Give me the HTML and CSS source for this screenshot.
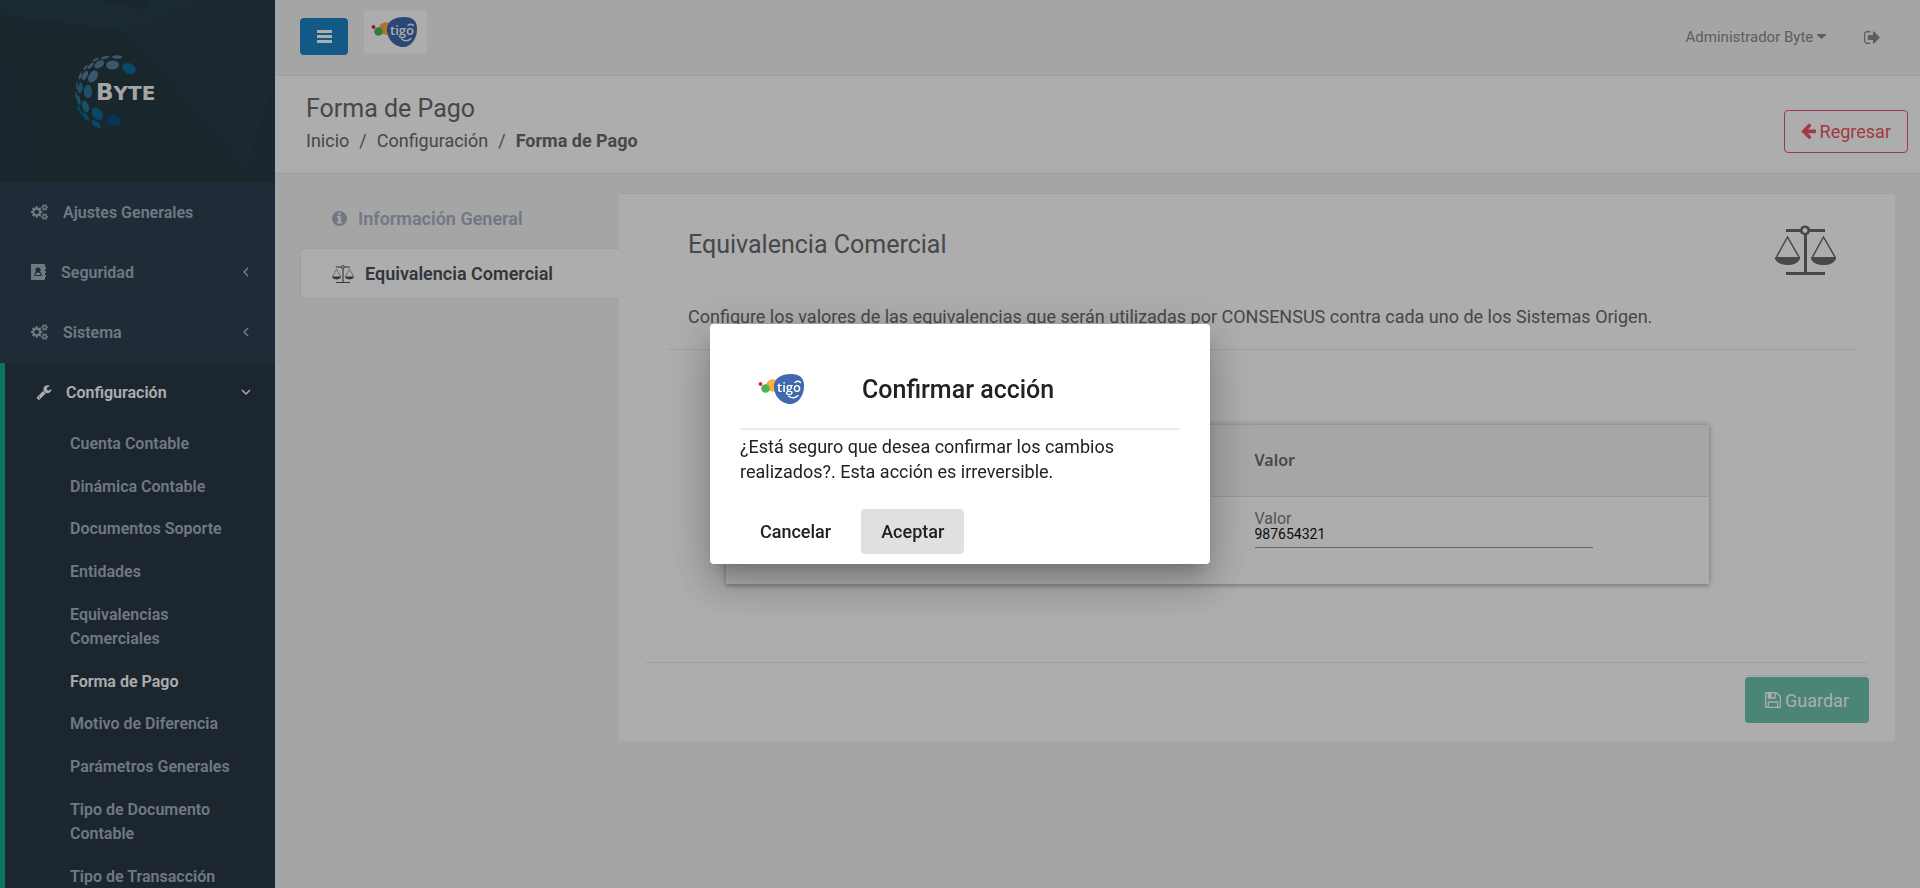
FILE: index.html
```html
<!DOCTYPE html>
<html lang="es">
<head>
<meta charset="utf-8">
<title>Forma de Pago</title>
<link rel="stylesheet" href="styles.css">
</head>
<body>
<svg class="defs" aria-hidden="true">
  <symbol id="cogs" viewBox="0 0 1920 1792"><path d="M896 896q0-106-75-181t-181-75-181 75-75 181 75 181 181 75 181-75 75-181zm768 512q0-52-38-90t-90-38-90 38-38 90q0 53 37.500 90.500t90.500 37.500 90.500-37.500 37.500-90.500zm0-1024q0-52-38-90t-90-38-90 38-38 90q0 53 37.500 90.500t90.500 37.500 90.500-37.500 37.500-90.500zm-384 421v185q0 10-7 19.500t-16 10.500l-155 24q-11 35-32 76 34 48 90 115 7 11 7 20 0 12-7 19-23 30-82.500 89.500t-78.500 59.500q-11 0-21-7l-115-90q-37 19-77 31-11 108-23 155-7 24-30 24h-186q-11 0-20-7.500t-10-17.500l-23-153q-34-10-75-31l-118 89q-7 7-20 7-11 0-21-8-144-133-144-160 0-9 7-19 10-14 41-53t47-61q-23-44-35-82l-152-24q-10-1-17-9.500t-7-19.500v-185q0-10 7-19.500t16-10.500l155-24q11-35 32-76-34-48-90-115-7-11-7-20 0-12 7-20 22-30 82-89t79-59q11 0 21 7l115 90q34-18 77-32 11-108 23-154 7-24 30-24h186q11 0 20 7.500t10 17.500l23 153q34 10 75 31l118-89q8-7 20-7 11 0 21 8 144 133 144 160 0 8-7 19-12 16-42 54t-45 60q23 48 34 82l152 23q10 2 17 10.500t7 19.500zm640 533v140q0 16-149 31-12 27-30 52 51 113 51 138 0 4-4 7-122 71-124 71-8 0-46-47t-52-68q-20 2-30 2t-30-2q-14 21-52 68t-46 47q-2 0-124-71-4-3-4-7 0-25 51-138-18-25-30-52-149-15-149-31v-140q0-16 149-31 13-29 30-52-51-113-51-138 0-4 4-7 4-2 35-20t59-34 30-16q8 0 46 46.500t52 67.500q20-2 30-2t30 2q51-71 92-112l6-2q4 0 124 70 4 3 4 7 0 25-51 138 17 23 30 52 149 15 149 31zm0-1024v140q0 16-149 31-12 27-30 52 51 113 51 138 0 4-4 7-122 71-124 71-8 0-46-47t-52-68q-20 2-30 2t-30-2q-14 21-52 68t-46 47q-2 0-124-71-4-3-4-7 0-25 51-138-18-25-30-52-149-15-149-31v-140q0-16 149-31 13-29 30-52-51-113-51-138 0-4 4-7 4-2 35-20t59-34 30-16q8 0 46 46.500t52 67.500q20-2 30-2t30 2q51-71 92-112l6-2q4 0 124 70 4 3 4 7 0 25-51 138 17 23 30 52 149 15 149 31z"/></symbol>
  <symbol id="book" viewBox="0 0 15 16"><path fill-rule="evenodd" d="M1 0h12q1 0 1 1v2h1v2h-1v2h1v2h-1v2h1v2h-1v2q0 1-1 1H1q-1 0-1-1V1q0-1 1-1zM7 3.500a2.500 2.500 0 0 0-2 4.200Q3 8.500 3 12h8Q11 8.500 9 7.700A2.500 2.500 0 0 0 7 3.500zM7 8.500q2.500 0 3 2.500H4Q4.500 8.500 7 8.500z"/></symbol>
  <symbol id="wrench" viewBox="0 0 1792 1792"><path d="M448 1472q0-26-19-45t-45-19-45 19-19 45 19 45 45 19 45-19 19-45zm644-420l-682 682q-37 37-90 37-52 0-91-37l-106-108q-38-36-38-90 0-53 38-91l681-681q39 98 114.500 173.500t173.500 114.500zm634-435q0 39-23 106-47 134-164.500 217.500t-258.500 83.500q-185 0-316.500-131.500t-131.500-316.500 131.500-316.500 316.500-131.500q58 0 121.500 16.500t107.500 46.500q16 11 16 28t-16 28l-293 169v224l193 107q5-3 79-48.500t135.500-81 70.500-35.500q15 0 23.500 10t8.500 25z"/></symbol>
  <symbol id="chevron" viewBox="0 0 10 10"><path fill="none" stroke="currentColor" stroke-width="1.500" d="M7 1 3 5l4 4"/></symbol>
  <symbol id="scale" viewBox="0 0 61 50"><path d="M11 4h14.200a5.200 5.200 0 0 1 9.800 0H50v3H35a5 5 0 0 1-3 3v37h18v3H11v-3h18V10a5 5 0 0 1-4-3H11z"/><circle class="scale-hole" cx="30" cy="5.500" r="2.400"/><path fill="none" stroke="currentColor" stroke-width="1.500" d="M1.500 32 12.500 12l11.500 20M37.500 32l11-20L60 32"/><path d="M0 32h25v2q-3 6-12.500 6T0 34zM36 32h25v2q-3 6-12.500 6T36 34z"/></symbol>
  <symbol id="tigo" viewBox="0 0 63 44"><circle cx="9.500" cy="17" r="1.900" fill="#e5174f"/><ellipse cx="22" cy="18.500" rx="7" ry="6.200" fill="#fbb040"/><circle cx="14.500" cy="21.500" r="4.300" fill="#4db457"/><path fill="#4069af" d="M23 18C24 11 30 7 40 7c9 0 13 4 13 12 0 10-6 18-14 18-9 0-17-9-16-19z"/><path fill="none" stroke="#fff" stroke-width="1.300" stroke-linecap="round" d="M44 15.500q3-2.500 5.500 0M37.500 29q5 4 9.500-.5"/></symbol>
</svg>
<div class="shell">
  <nav class="sidebar" aria-label="Principal">
    <header class="brand">
      <svg viewBox="0 0 275 183" preserveAspectRatio="xMidYMid slice" role="img" aria-label="Byte">
        <path fill="#263945" d="M0 0h275v183H0z"/>
        <path fill="#283e4a" d="M148 0h60l-80 32z"/>
        <path fill="#283d4a" d="M0 0h100l48 12-20 20L0 14z"/>
        <path fill="#263842" d="M0 24l122 11 125 133 8 15H20l12-29z"/>
        <path fill="#283b49" d="M128 32 208 0h67v83l-28 85z"/>
        <path fill="#273946" d="M0 55l32 99-12 29H0zM275 83v60l-28 25z"/>
        <g fill="#56829f">
          <ellipse cx="117" cy="57" rx="5" ry="1.700"/><ellipse cx="105" cy="57.500" rx="4.300" ry="1.300" transform="rotate(-15 105 57.500)"/><ellipse cx="96" cy="59.500" rx="3.400" ry="1" transform="rotate(-25 96 59.500)"/>
          <ellipse cx="112.500" cy="65" rx="6.500" ry="4.500" transform="rotate(-5 112.500 65)"/><ellipse cx="99.300" cy="64.300" rx="5.400" ry="3.300" transform="rotate(-30 99.300 64.300)"/>
          <ellipse cx="90.700" cy="65.700" rx="4" ry="1.500" transform="rotate(-45 90.700 65.700)"/><ellipse cx="85.500" cy="67.500" rx="3.200" ry="1" transform="rotate(-50 85.500 67.500)"/>
          <ellipse cx="93" cy="76.500" rx="4.200" ry="6.500" transform="rotate(32 93 76.500)"/><ellipse cx="85" cy="75.500" rx="2.300" ry="5" transform="rotate(25 85 75.500)"/><ellipse cx="80.300" cy="76" rx="1.200" ry="3.700" transform="rotate(22 80.300 76)"/>
        </g>
        <g fill="#2f7499">
          <ellipse cx="88" cy="91.500" rx="4.200" ry="6.700"/><ellipse cx="80.300" cy="88" rx="2.300" ry="5.500" transform="rotate(8 80.300 88)"/><ellipse cx="77" cy="86" rx="1" ry="4"/>
          <ellipse cx="85.500" cy="106.500" rx="3.300" ry="6" transform="rotate(-18 85.500 106.500)"/><ellipse cx="78.700" cy="100" rx="1.700" ry="5" transform="rotate(-12 78.700 100)"/><ellipse cx="76" cy="95.500" rx=".8" ry="4"/>
        </g>
        <g fill="#0b6c9c">
          <ellipse cx="129" cy="68.500" rx="7.200" ry="5" transform="rotate(22 129 68.500)"/><ellipse cx="97.300" cy="113.700" rx="4.800" ry="7" transform="rotate(-38 97.300 113.700)"/>
          <ellipse cx="79.500" cy="110" rx="1.200" ry="4.500" transform="rotate(-25 79.500 110)"/><ellipse cx="85.700" cy="116.700" rx="2" ry="5" transform="rotate(-35 85.700 116.700)"/><ellipse cx="96" cy="124" rx="5.500" ry="2.600" transform="rotate(37 96 124)"/>
        </g>
        <ellipse cx="113.300" cy="120.500" rx="7.300" ry="5.200" fill="#08507f" transform="rotate(12 113.300 120.500)"/>
        <text class="byte-text" x="96" y="100">B<tspan class="byte-small">YTE</tspan></text>
      </svg>
    </header>
    <ul class="menu">
      <li><a class="menu-link" href="#"><svg class="ico-cogs"><use href="#cogs"/></svg><span>Ajustes Generales</span></a></li>
      <li><a class="menu-link" href="#"><svg class="ico-book"><use href="#book"/></svg><span>Seguridad</span><svg class="chev"><use href="#chevron"/></svg></a></li>
      <li><a class="menu-link" href="#"><svg class="ico-cogs"><use href="#cogs"/></svg><span>Sistema</span><svg class="chev"><use href="#chevron"/></svg></a></li>
      <li class="open">
        <a class="menu-link" href="#"><svg class="ico-wrench"><use href="#wrench"/></svg><span>Configuración</span><svg class="chev down"><use href="#chevron"/></svg></a>
        <ul class="submenu">
          <li><a href="#">Cuenta Contable</a></li>
          <li><a href="#">Dinámica Contable</a></li>
          <li><a href="#">Documentos Soporte</a></li>
          <li><a href="#">Entidades</a></li>
          <li><a href="#">Equivalencias Comerciales</a></li>
          <li><a class="current" href="#">Forma de Pago</a></li>
          <li><a href="#">Motivo de Diferencia</a></li>
          <li><a href="#">Parámetros Generales</a></li>
          <li><a href="#">Tipo de Documento Contable</a></li>
          <li><a href="#">Tipo de Transacción</a></li>
        </ul>
      </li>
    </ul>
  </nav>
  <main class="main">
    <div class="topbar">
      <button class="burger" type="button" aria-label="Menú"><svg viewBox="0 0 15 13"><path d="M0 0h15v3H0zM0 5h15v3H0zM0 10h15v3H0z"/></svg></button>
      <svg class="client-logo" viewBox="0 0 63 44" role="img" aria-label="tigo"><use href="#tigo"/><text class="tigo-text" x="26" y="25">tigo</text></svg>
      <div class="user">
        <a href="#">Administrador Byte <svg class="caret" viewBox="0 0 9 5"><path d="M0 0h9v1L4.500 5 0 1z"/></svg></a>
        <a href="#" aria-label="Salir"><svg class="ico-out" viewBox="64 256 1600 1280"><path d="M704 1440q0 4 1 20t.5 26.500-3 23.500-10 19.500-20.500 6.500h-320q-119 0-203.500-84.500t-84.500-203.500v-704q0-119 84.500-203.500t203.500-84.500h320q13 0 22.500 9.500t9.500 22.500q0 4 1 20t.5 26.500-3 23.500-10 19.500-20.500 6.500h-320q-66 0-113 47t-47 113v704q0 66 47 113t113 47h312l11.500 1 11.500 3 8 5.500 7 9 2 13.500zm928-544q0 26-19 45l-544 544q-19 19-45 19t-45-19-19-45v-288h-448q-26 0-45-19t-19-45v-384q0-26 19-45t45-19h448v-288q0-26 19-45t45-19 45 19l544 544q19 19 19 45z"/></svg></a>
      </div>
    </div>
    <div class="page-head">
      <div>
        <h1>Forma de Pago</h1>
        <ol class="crumbs"><li><a href="#">Inicio</a></li><li><a href="#">Configuración</a></li><li><strong>Forma de Pago</strong></li></ol>
      </div>
      <button class="back" type="button"><svg viewBox="128 192 1536 1472"><path d="M1664 896v128q0 53-32.500 90.500t-84.500 37.500h-704l293 294q38 36 38 90t-38 90l-75 76q-37 37-90 37-52 0-91-37l-651-652q-37-37-37-90 0-52 37-91l651-650q38-38 91-38 52 0 90 38l75 74q38 38 38 91t-38 91l-293 293h704q52 0 84.500 37.500t32.500 90.500z"/></svg>Regresar</button>
    </div>
    <div class="content">
      <nav class="tabs" aria-label="Secciones">
        <a class="tab" href="#"><svg class="ico-info" viewBox="128 128 1536 1536"><path d="M1152 1376v-160q0-14-9-23t-23-9h-96v-512q0-14-9-23t-23-9h-320q-14 0-23 9t-9 23v160q0 14 9 23t23 9h96v320h-96q-14 0-23 9t-9 23v160q0 14 9 23t23 9h448q14 0 23-9t9-23zm-128-896v-160q0-14-9-23t-23-9h-192q-14 0-23 9t-9 23v160q0 14 9 23t23 9h192q14 0 23-9t9-23zm640 416q0 209-103 385.500t-279.500 279.500-385.500 103-385.500-103-279.500-279.500-103-385.500 103-385.500 279.500-279.500 385.500-103 385.500 103 279.500 279.500 103 385.500z"/></svg>Información General</a>
        <a class="tab active" href="#"><svg class="ico-scale"><use href="#scale"/></svg>Equivalencia Comercial</a>
      </nav>
      <section class="card">
        <div class="intro">
          <div class="intro-head"><h2>Equivalencia Comercial</h2><svg class="big-scale"><use href="#scale"/></svg></div>
          <p>Configure los valores de las equivalencias que serán utilizadas por CONSENSUS contra cada uno de los Sistemas Origen.</p>
        </div>
        <table class="grid">
          <thead><tr><td></td><th scope="col">Valor</th></tr></thead>
          <tbody><tr><td></td><td><label for="valor">Valor</label><input id="valor" type="text" value="987654321"></td></tr></tbody>
        </table>
        <footer class="card-foot">
          <div class="save-wrap"><button class="save" type="button"><svg viewBox="128 128 1536 1536"><path d="M512 1536h768v-384h-768v384zm896 0h128v-896q0-14-10-38.500t-20-34.500l-281-281q-10-10-34-20t-39-10v416q0 40-28 68t-68 28h-576q-40 0-68-28t-28-68v-416h-128v1280h128v-416q0-40 28-68t68-28h832q40 0 68 28t28 68v416zm-384-928v-320q0-13-9.500-22.500t-22.500-9.500h-192q-13 0-22.500 9.500t-9.500 22.500v320q0 13 9.500 22.500t22.500 9.500h192q13 0 22.500-9.500t9.500-22.500zm640 32v928q0 40-28 68t-68 28h-1344q-40 0-68-28t-28-68v-1344q0-40 28-68t68-28h928q40 0 88 20t76 48l280 280q28 28 48 76t20 88z"/></svg>Guardar</button></div>
        </footer>
      </section>
    </div>
  </main>
</div>
<div class="backdrop">
  <div class="dialog" role="dialog" aria-modal="true" aria-labelledby="dlg-title">
    <div class="dialog-head"><svg class="dialog-logo" viewBox="0 0 63 44" role="img" aria-label="tigo"><use href="#tigo"/><text class="tigo-text" x="26" y="25">tigo</text></svg><h3 id="dlg-title">Confirmar acción</h3></div>
    <p>¿Está seguro que desea confirmar los cambios realizados?. Esta acción es irreversible.</p>
    <div class="dialog-actions"><button type="button">Cancelar</button><button class="focused" type="button">Aceptar</button></div>
  </div>
</div>
</body>
</html>
```

FILE: styles.css
```css
* { box-sizing: border-box; }
body { margin: 0; font-family: Roboto, "Liberation Sans", sans-serif; font-size: 16px; color: #676a6c; background: #f3f3f4; overflow: hidden; }
h1, h2, h3, p, ul, ol { margin: 0; padding: 0; }
ul, ol { list-style: none; }
a { color: inherit; text-decoration: none; }
button { font: inherit; cursor: pointer; }
svg { fill: currentColor; flex: none; }
.defs { position: absolute; width: 0; height: 0; }
.shell { display: grid; grid-template-columns: 275px minmax(0, 1fr); height: 100vh; overflow: hidden; }

.sidebar { background: #2f4050; color: #a7b1c2; font-weight: 600; overflow: hidden; }
.brand { height: 183px; }
.brand svg { display: block; width: 100%; height: 100%; }
.byte-text { font: bold 23px "DejaVu Sans", sans-serif; fill: #f4f4f4; }
.byte-small { font-size: 20px; }
.menu-link { display: flex; align-items: center; height: 60px; padding: 0 24px 2px 31px; }
.ico-cogs { width: 17px; height: 16px; margin-right: 15px; }
.ico-book { width: 15px; height: 16px; margin-right: 15px; }
.ico-wrench { width: 16px; height: 16px; margin-right: 14px; }
.chev { width: 10px; height: 10px; margin-left: auto; }
.down { transform: rotate(-90deg); }
.open { background: #293846; border-left: 5px solid #19aa8d; min-height: 560px; }
.open > .menu-link { color: #fff; }
.submenu a { display: block; padding: 9px 40px 9px 65px; line-height: 1.54; }
.submenu .current { color: #fff; }

.topbar { display: flex; align-items: flex-start; height: 76px; padding: 10px 40px 0 25px; border-bottom: 1px solid #e7eaec; }
.burger { display: grid; place-items: center; width: 48px; height: 37px; margin: 8px 16px 0 0; padding: 0; border: 0; border-radius: 4px; background: #1d84c6; color: #fff; }
.burger svg { width: 15px; height: 13px; }
.client-logo { width: 63px; height: 44px; background: #fff; }
.tigo-text { font: 600 13px "Open Sans", sans-serif; fill: #fff; }
.user { display: flex; align-items: center; gap: 38px; height: 54px; margin: 0 0 0 auto; color: #888b8d; font-size: 15px; }
.caret { width: 9px; height: 5px; vertical-align: 3px; }
.ico-out { display: block; width: 16px; height: 13px; }

.page-head { display: flex; justify-content: space-between; align-items: center; height: 98px; padding: 0 12px 0 31px; background: #fff; border-bottom: 1px solid #e7eaec; }
h1, h2 { font-size: 25px; font-weight: 400; line-height: 32px; }
.crumbs { display: flex; font-size: 18px; line-height: 32px; }
.crumbs li + li::before { content: "/"; padding: 0 10px; }
.back { display: flex; align-items: center; gap: 4px; height: 43px; margin-top: 13px; padding: 0 16px; border: 1px solid #ed5565; border-radius: 4px; background: none; color: #ed5565; font-size: 18px; }
.back svg { width: 15px; height: 16px; }

.content { display: grid; grid-template-columns: minmax(0, 1fr) minmax(0, 4fr); padding: 19px 25px 0; }
.tab { display: flex; align-items: center; height: 50px; padding: 0 32px; color: #a7b1c2; font-size: 18px; font-weight: 600; }
.tab + .tab { margin-top: 5px; }
.tab.active { background: #fff; color: #495057; border: 1px solid #e7eaec; border-right: 0; border-radius: 4px 0 0 4px; padding: 0 31px; height: 51px; }
.ico-info { width: 15px; height: 15px; margin-right: 11px; }
.ico-scale { width: 22px; height: 18px; margin-right: 11px; }
.scale-hole { fill: #fff; }
.card { background: #fff; border-top: 1px solid #e7eaec; padding: 31px 26px 18px; }
.intro { margin: 0 11px 75px 23px; padding: 0 20px 20px; border-bottom: 1px solid #e7eaec; }
.intro-head { display: flex; justify-content: space-between; height: 80px; }
.intro-head h2 { margin-top: 4px; }
.big-scale { width: 61px; height: 50px; margin-right: 2px; }
.intro p { font-size: 18px; line-height: 24px; }
.grid { width: calc(100% - 241px); margin: 0 0 0 81px; border-collapse: collapse; table-layout: fixed; box-shadow: 0 0 6px rgba(0, 0, 0, .3), 0 3px 3px rgba(0, 0, 0, .1); }
.grid th { height: 71px; padding: 0 37px; text-align: left; font: 600 16px "Noto Sans", sans-serif; }
.grid thead tr { background: #f5f5f6; border-bottom: 1px solid #e0e0e0; }
.grid tbody td { height: 88px; padding: 14px 116px 0 37px; vertical-align: top; }
.grid label { display: block; line-height: 16px; color: #7c7c7c; }
.grid input { display: block; width: 100%; height: 21px; padding: 0 0 6px; border: 0; border-bottom: 1px solid #949494; border-radius: 0; background: none; color: #111; font: 14px Roboto, sans-serif; outline: 0; }
.card-foot { display: flex; justify-content: flex-end; margin-top: 78px; padding-top: 12px; border-top: 1px solid #e7eaec; }
.save-wrap { border-top: 1px solid #e7eaec; padding-top: 1px; }
.save { display: flex; align-items: center; gap: 4px; height: 46px; padding: 0 20px; border: 0; border-radius: 4px; background: #6dc5b0; color: #fff; font-size: 18px; }
.save svg { width: 16px; height: 16px; }

.backdrop { position: fixed; inset: 0; display: grid; place-items: center; background: rgba(0, 0, 0, .32); }
.dialog { width: 500px; padding: 30px 30px 10px; border-radius: 4px; background: #fff; color: #212121; box-shadow: 0 11px 15px -7px rgba(0, 0, 0, .2), 0 24px 38px 3px rgba(0, 0, 0, .14), 0 9px 46px 8px rgba(0, 0, 0, .12); }
.dialog-head { display: flex; align-items: center; gap: 48px; height: 76px; padding: 0 0 4px 11px; border-bottom: 2px solid #ebebeb; }
.dialog-logo { width: 63px; height: 44px; }
.dialog h3 { font-size: 25px; font-weight: 500; }
.dialog p { padding-top: 4px; font-size: 18px; line-height: 25px; }
.dialog-actions { display: flex; gap: 10px; margin-top: 25px; }
.dialog-actions button { height: 45px; padding: 0 20px; border: 0; border-radius: 4px; background: none; color: #212121; font-size: 18px; font-weight: 500; }
.dialog-actions .focused { background: #e0e0e0; }
```
